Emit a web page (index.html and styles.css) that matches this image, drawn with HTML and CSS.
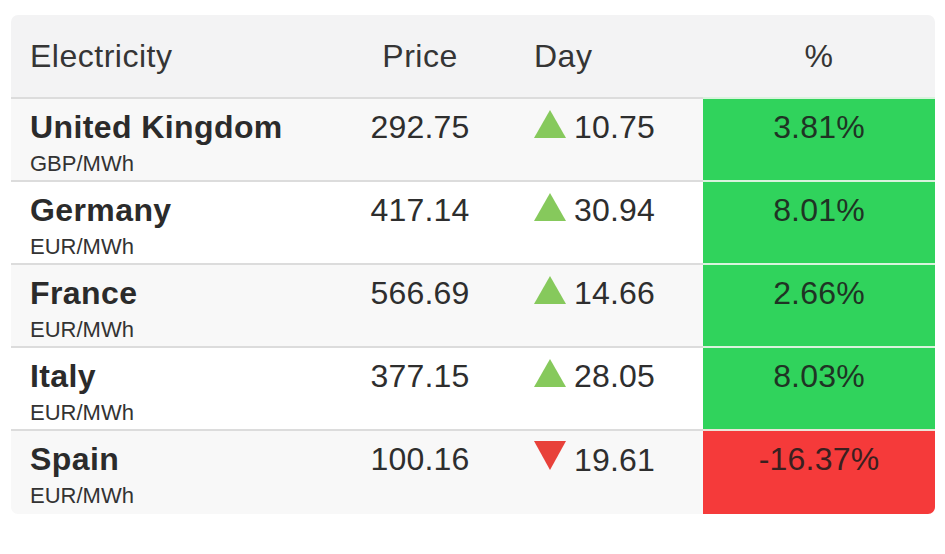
FILE: index.html
```html
<!DOCTYPE html>
<html lang="en">
<head>
  <meta charset="UTF-8">
  <title>Electricity Prices</title>
  <link rel="stylesheet" href="styles.css">
</head>
<body>

  <div class="card">
    <table>
      <colgroup>
        <col class="col-name">
        <col class="col-price">
        <col class="col-day">
        <col class="col-pct">
      </colgroup>
      <thead>
        <tr>
          <th class="name">Electricity</th>
          <th class="price">Price</th>
          <th class="day">Day</th>
          <th class="pct">%</th>
        </tr>
      </thead>
      <tbody>
        <tr>
          <td class="name"><div class="country">United Kingdom</div><div class="unit">GBP/MWh</div></td>
          <td class="price">292.75</td>
          <td class="day"><span class="arrow up"></span>10.75</td>
          <td class="pct up">3.81%</td>
        </tr>
        <tr>
          <td class="name"><div class="country">Germany</div><div class="unit">EUR/MWh</div></td>
          <td class="price">417.14</td>
          <td class="day"><span class="arrow up"></span>30.94</td>
          <td class="pct up">8.01%</td>
        </tr>
        <tr>
          <td class="name"><div class="country">France</div><div class="unit">EUR/MWh</div></td>
          <td class="price">566.69</td>
          <td class="day"><span class="arrow up"></span>14.66</td>
          <td class="pct up">2.66%</td>
        </tr>
        <tr>
          <td class="name"><div class="country">Italy</div><div class="unit">EUR/MWh</div></td>
          <td class="price">377.15</td>
          <td class="day"><span class="arrow up"></span>28.05</td>
          <td class="pct up">8.03%</td>
        </tr>
        <tr class="last">
          <td class="name"><div class="country">Spain</div><div class="unit">EUR/MWh</div></td>
          <td class="price">100.16</td>
          <td class="day"><span class="arrow down"></span>19.61</td>
          <td class="pct down">-16.37%</td>
        </tr>
      </tbody>
    </table>
  </div>

</body>
</html>
```

FILE: styles.css
```css
body {
  margin: 0;
  background: #ffffff;
  font-family: 'Liberation Sans', Arial, sans-serif;
  color: #2e2e2e;
}

.card {
  width: 924px;
  margin: 15px 0 0 11px;
  border-radius: 7px;
  overflow: hidden;
}

table {
  width: 100%;
  table-layout: fixed;
  border-collapse: separate;
  border-spacing: 0;
  font-size: 32px;
}

.col-name { width: 319px; }
.col-price { width: 180px; }
.col-day { width: 193px; }
.col-pct { width: 232px; }

th {
  height: 82px;
  padding: 0;
  font-weight: normal;
  background: #f3f3f4;
  color: #353535;
  vertical-align: middle;
  line-height: 36px;
  letter-spacing: 0.5px;
}

td {
  border-top: 2px solid #dcdcdc;
  padding: 10px 0 0 0;
  vertical-align: top;
  line-height: 36px;
  letter-spacing: 0.2px;
}

tbody tr:nth-child(odd) td {
  background: #f8f8f8;
}

tbody tr:nth-child(even) td {
  background: #ffffff;
}

.name {
  text-align: left;
  padding-left: 19px;
}

td.name {
  padding-bottom: 3px;
}

tr.last td.name {
  padding-bottom: 5px;
}

.price {
  text-align: center;
}

.day {
  text-align: left;
  padding-left: 24px;
}

.pct {
  text-align: center;
}

.country {
  font-weight: bold;
  color: #2b2b2b;
  letter-spacing: 0.4px;
}

.unit {
  font-size: 22px;
  line-height: 26px;
  margin-top: 6px;
  color: #333;
  letter-spacing: 0;
}

.arrow {
  display: inline-block;
  width: 0;
  height: 0;
  margin-right: 8px;
  border-left: 16px solid transparent;
  border-right: 16px solid transparent;
}

.arrow.up {
  border-bottom: 28px solid #86c95c;
}

.arrow.down {
  border-top: 29px solid #e8413a;
  margin-bottom: 1px;
}

tbody tr td.pct.up {
  background: #30d35c;
  border-top-color: #d9f3dd;
  color: #1f3324;
}

tbody tr td.pct.down {
  background: #f53a3a;
  border-top-color: #ece4d8;
  color: #3a1f1f;
}
```
